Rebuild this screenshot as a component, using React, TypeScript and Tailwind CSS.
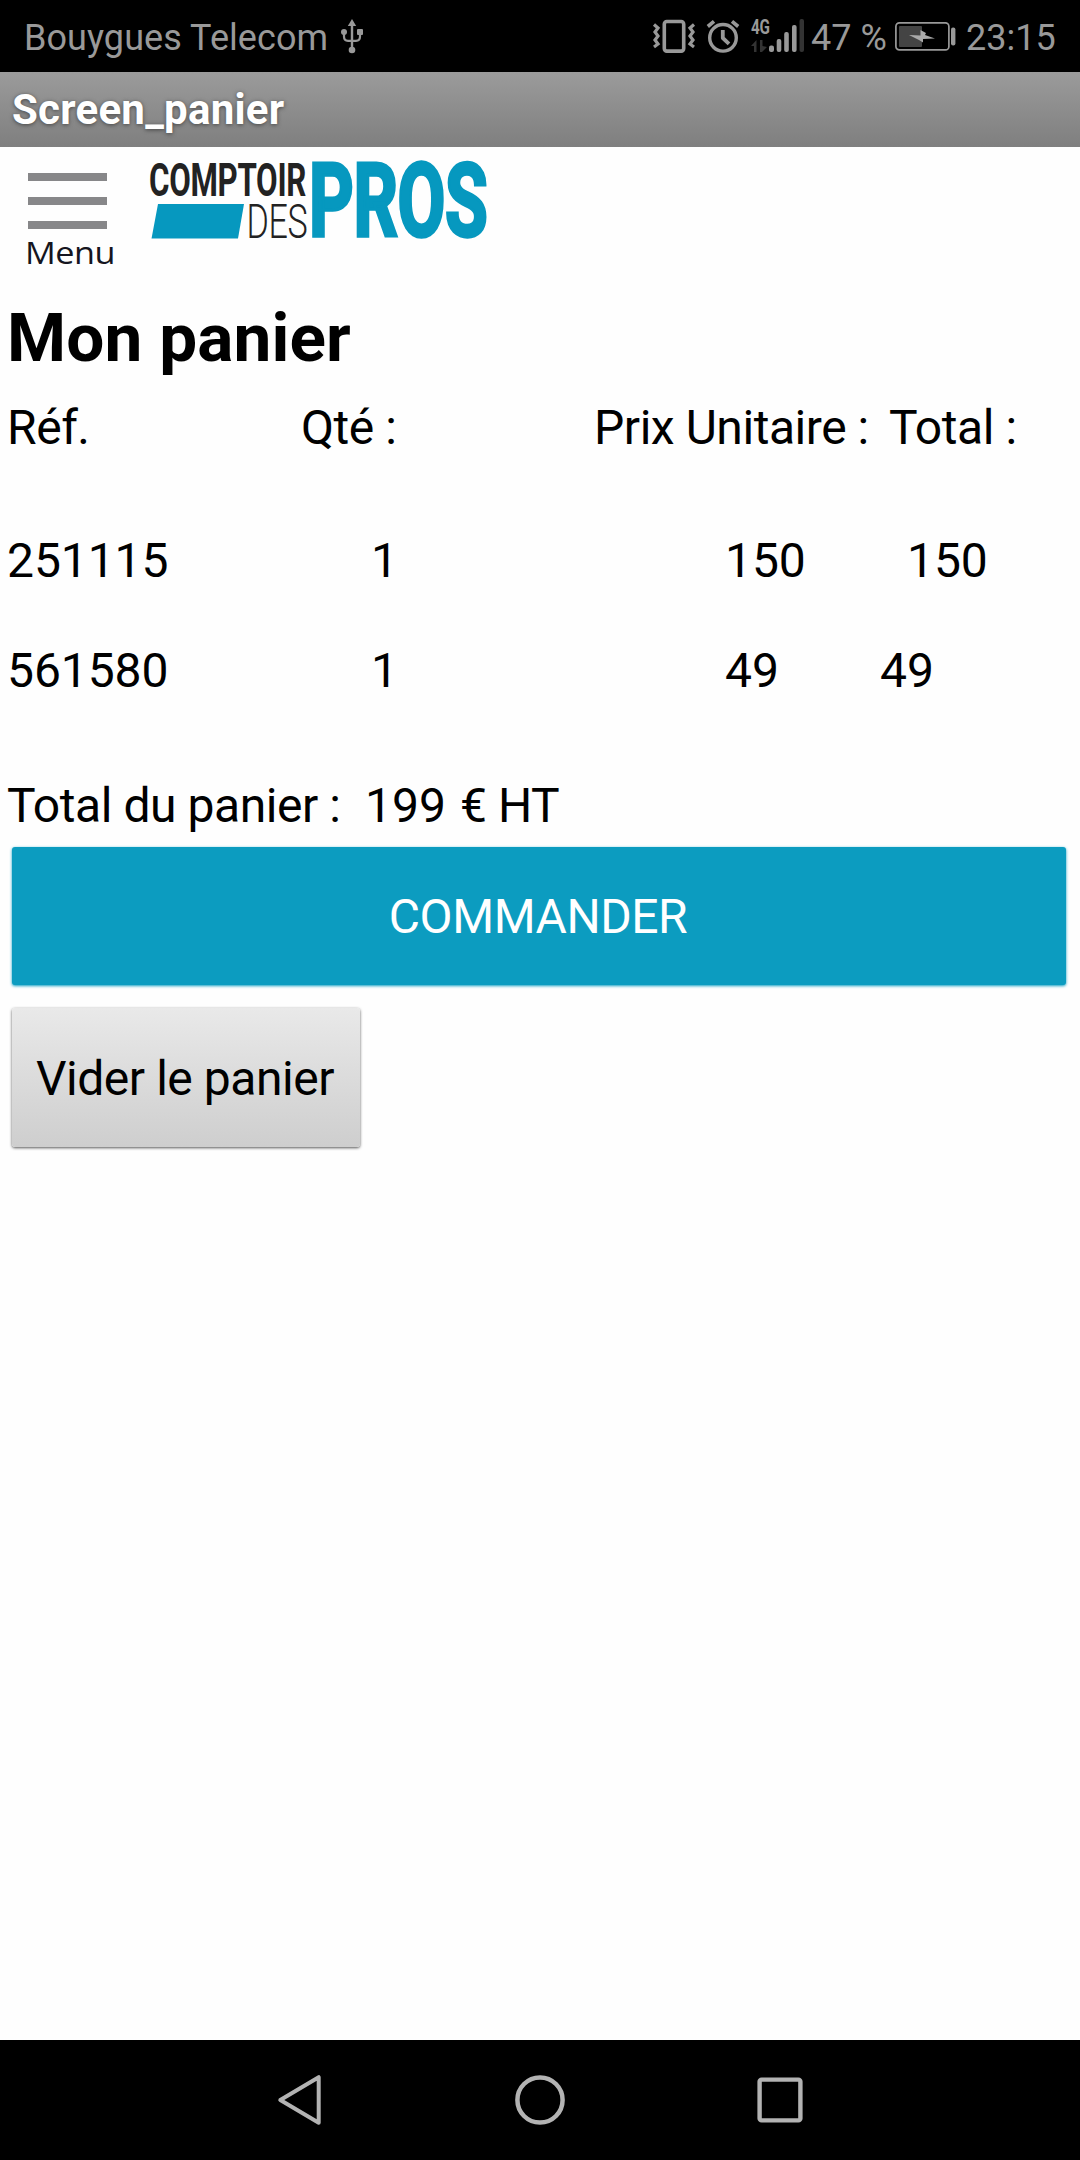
import React from "react";

interface CartLine {
  ref: string;
  qty: number;
  unitPrice: number;
  total: number;
}

const lines: CartLine[] = [
  { ref: "251115", qty: 1, unitPrice: 150, total: 150 },
  { ref: "561580", qty: 1, unitPrice: 49, total: 49 },
];

function UsbIcon() {
  return (
    <svg width="24" height="36" viewBox="0 0 24 36" className="shrink-0" fill="#999" stroke="none">
      <path d="M12 1 L16.2 8 H7.8 Z" />
      <rect x="10.8" y="6" width="2.4" height="26" />
      <circle cx="12" cy="32" r="3.3" />
      <circle cx="4" cy="14" r="3" />
      <rect x="17" y="11" width="6" height="6" rx="1" />
      <path d="M4 14 V18.5 Q4 22.8 8 22.8 H16 Q20 22.8 20 18.5 V15" fill="none" stroke="#999" strokeWidth="2.2" />
    </svg>
  );
}

function VibrateIcon() {
  return (
    <svg width="44" height="36" viewBox="0 0 44 36" className="shrink-0" fill="none" stroke="#999">
      <rect x="12.3" y="3.5" width="19.4" height="29.6" rx="2.5" strokeWidth="3.6" />
      <path d="M2 6.5 L6 10 L3 14 L6 18 L3 22 L6 26 L2 29" strokeWidth="3.2" />
      <path d="M42 6.5 L38 10 L41 14 L38 18 L41 22 L38 26 L42 29" strokeWidth="3.2" />
    </svg>
  );
}

function AlarmIcon() {
  return (
    <svg width="34" height="36" viewBox="0 0 34 36" className="shrink-0" fill="none" stroke="#999" strokeWidth="3.4">
      <circle cx="17" cy="19.8" r="13.3" />
      <path d="M16.8 12 V20 L23 25.8" strokeWidth="3.8" strokeLinejoin="round" />
      <path d="M1.8 8.5 L8 3.3 M32.2 8.5 L26 3.3" strokeWidth="3.6" />
    </svg>
  );
}

function SignalIcon() {
  return (
    <svg width="54" height="36" viewBox="0 0 54 36" className="shrink-0 overflow-visible">
      <text
        x="0"
        y="16"
        fill="#999"
        fontFamily="Roboto, sans-serif"
        fontWeight="700"
        fontSize="20"
        textLength="18.5"
        lengthAdjust="spacingAndGlyphs"
      >
        4G
      </text>
      <g fill="#333">
        <path d="M5.5 22 V34 H3 V28 H0 Z M9 22 H11.5 V28 L16 29 L11 34 H9 Z" />
        <rect x="48.5" y="1" width="4.5" height="33" rx="2" />
      </g>
      <g fill="#999">
        <rect x="18" y="27.5" width="5" height="6.5" rx="2" />
        <rect x="25.7" y="21" width="4.6" height="13" rx="2" />
        <rect x="33.2" y="14" width="4.6" height="20" rx="2" />
        <rect x="41" y="7" width="4.6" height="27" rx="2" />
      </g>
    </svg>
  );
}

function BatteryIcon() {
  return (
    <svg width="61" height="36" viewBox="0 0 61 36" className="shrink-0">
      <rect x="0.9" y="4.9" width="53" height="27" rx="3.5" fill="none" stroke="#999" strokeWidth="1.7" />
      <rect x="4" y="8" width="23" height="21" rx="1" fill="#444" />
      <path d="M14 17 L25.5 17.5 V12 L31 15 L30 17 L40 20.5 L28 21 V24.5 L24 22 Z" fill="#aaa" />
      <rect x="56" y="9.5" width="4.4" height="18" rx="2" fill="#999" />
    </svg>
  );
}

function StatusBar() {
  return (
    <div className="flex h-[72px] items-center bg-black pr-[22px] pl-6 text-[36px] leading-[42px] text-[#999]">
      <span className="w-[305px] pt-[3px] tracking-[0.06px] whitespace-nowrap">Bouygues Telecom</span>
      <span className="ml-[11px]">
        <UsbIcon />
      </span>
      <div className="ml-auto flex items-center">
        <VibrateIcon />
        <span className="ml-[10px]"><AlarmIcon /></span>
        <span className="ml-[11px]"><SignalIcon /></span>
        <span className="ml-[6px] w-[76px] pt-[3px] tracking-normal whitespace-nowrap">47 %</span>
        <span className="ml-[8px]"><BatteryIcon /></span>
        <span className="ml-[10px] w-[92px] pt-[3px] tracking-normal whitespace-nowrap">23:15</span>
      </div>
    </div>
  );
}

function MenuButton() {
  return (
    <button className="flex w-[86px] flex-col items-start">
      <span className="mt-[26px] flex flex-col gap-4">
        <span className="h-2 w-[79px] bg-[#878789]" />
        <span className="h-2 w-[79px] bg-[#878789]" />
        <span className="h-2 w-[79px] bg-[#878789]" />
      </span>
      <svg width="88" height="40" viewBox="0 0 88 40" className="overflow-visible">
        <text
          x="-3"
          y="35"
          fill="#151520"
          fontFamily="'Open Sans', sans-serif"
          fontSize="31"
          textLength="90"
          lengthAdjust="spacingAndGlyphs"
        >
          Menu
        </text>
      </svg>
    </button>
  );
}

function Logo() {
  return (
    <svg width="342" height="80" viewBox="0 0 342 80" fontFamily="Roboto, sans-serif" className="overflow-visible">
      <text x="-1" y="35" fill="#222" fontWeight="700" fontSize="47" textLength="157" lengthAdjust="spacingAndGlyphs">
        COMPTOIR
      </text>
      <path d="M8 43 H94 L88 77.5 H1.5 Z" fill="#0698bf" />
      <text x="96.5" y="77" fill="#222" fontWeight="300" fontSize="48" textLength="61" lengthAdjust="spacingAndGlyphs">
        DES
      </text>
      <text
        x="159"
        y="75.2"
        fill="#0698bf"
        stroke="#0698bf"
        strokeWidth="3.5"
        fontWeight="700"
        fontSize="102"
        textLength="178.5"
        lengthAdjust="spacingAndGlyphs"
      >
        PROS
      </text>
    </svg>
  );
}

function CartRow({ line }: { line: CartLine }) {
  return (
    <div className="flex tracking-[-0.1px]">
      <span className="w-[364px]">{line.ref}</span>
      <span className="w-[354px]">{line.qty}</span>
      <span className={line.total >= 100 ? "w-[182px]" : "w-[155px]"}>{line.unitPrice}</span>
      <span>{line.total}</span>
    </div>
  );
}

function NavBar() {
  return (
    <nav className="mt-auto flex h-[120px] items-center justify-between bg-black px-[274px]">
      <svg width="50" height="52" viewBox="0 0 50 52" fill="none" stroke="#b3b3b3" strokeWidth="4" strokeLinejoin="round">
        <path d="M44.7 3.2 V48.8 L6.3 26 Z" />
      </svg>
      <svg width="50" height="52" viewBox="0 0 50 52" fill="none" stroke="#b3b3b3" strokeWidth="4.5">
        <circle cx="25" cy="26" r="22.6" />
      </svg>
      <svg width="50" height="52" viewBox="0 0 50 52" fill="none" stroke="#b3b3b3" strokeWidth="4.4">
        <rect x="3.6" y="5.6" width="40.8" height="40.8" rx="2" />
      </svg>
    </nav>
  );
}

export default function App() {
  return (
    <div className="flex h-[2160px] w-[1080px] flex-col overflow-hidden bg-[#fefefe] font-['Roboto',sans-serif] text-[48px] leading-[56px] tracking-[-0.45px] text-black">
      <StatusBar />
      <header className="flex h-[75px] items-center bg-linear-to-b from-[#9b9b9b] to-[#7f7f7f] pl-[12px] text-[42px] font-bold tracking-[0.25px] text-white [text-shadow:0_1px_4px_#444]">
        Screen_panier
      </header>

      {/* Menu and brand */}
      <div className="flex h-[151px] items-start pl-7">
        <MenuButton />
        <div className="ml-9 pt-[14px]">
          <Logo />
        </div>
      </div>

      <main className="flex flex-col">
        <h1 className="pl-[7px] text-[67.5px] leading-[80px] font-bold tracking-[0.1px]">Mon panier</h1>

        {/* Cart lines */}
        <div className="mt-[22px] flex pl-[7px] whitespace-nowrap">
          <span className="w-[294px]">Réf.</span>
          <span className="w-[293px]">Qté :</span>
          <span className="w-[295px]">Prix Unitaire :</span>
          <span>Total :</span>
        </div>
        <div className="mt-[77px] flex flex-col gap-[54px] pl-[7px]">
          {lines.map((line) => (
            <CartRow key={line.ref} line={line} />
          ))}
        </div>

        <div className="mt-[79px] flex pl-[7px] whitespace-nowrap">
          <span className="w-[358px]">Total du panier :</span>
          <span className="w-[95px] tracking-normal">199</span>
          <span>€ HT</span>
        </div>

        {/* Actions */}
        <button className="mt-[13px] ml-[12px] h-[138px] w-[1054px] rounded-[3px] bg-[#0c9cc0] pt-[2px] pr-[2px] text-white shadow-[0_1px_3px_#0c9cc0]">
          COMMANDER
        </button>
        <button className="mt-[23px] ml-[12px] h-[139px] w-[348px] rounded-[3px] bg-linear-to-b from-[#e9e9e9] to-[#cecece] pt-[3px] pr-[2px] whitespace-nowrap shadow-[0_1px_3px_#555]">
          Vider le panier
        </button>
      </main>

      <NavBar />
    </div>
  );
}
